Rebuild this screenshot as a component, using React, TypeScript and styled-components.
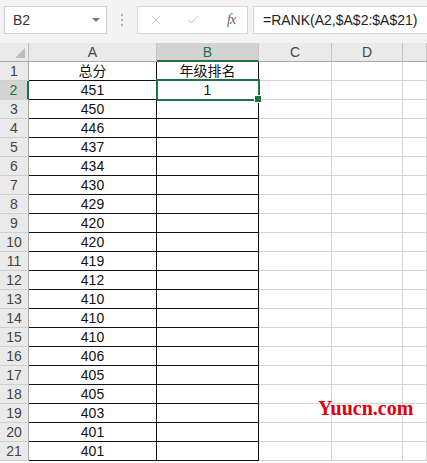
import React from 'react';
import styled, { createGlobalStyle, css } from 'styled-components';
import { X, Check } from 'lucide-react';

const GlobalStyle = createGlobalStyle`
  html, body {
    margin: 0;
    padding: 0;
    background: #ffffff;
    overflow: hidden;
  }
  * { box-sizing: border-box; }
`;

const GREEN = '#217346';
const FONT = `"Liberation Sans", "Noto Sans CJK SC", Arial, sans-serif`;

const Page = styled.div`
  position: relative;
  width: 427px;
  height: 463px;
  overflow: hidden;
  font-family: ${FONT};
`;

const Toolbar = styled.div`
  height: 43px;
  background: #f3f3f3;
  display: flex;
  align-items: flex-start;
  padding: 6px 0 0 4px;
`;

const NameBox = styled.div`
  width: 103px;
  height: 28px;
  background: #ffffff;
  border: 1px solid #d0d0d0;
  display: flex;
  align-items: center;
  justify-content: space-between;
  padding: 0 6px 0 8px;
  font-size: 14px;
  color: #333;
`;

const Caret = styled.span`
  width: 0;
  height: 0;
  border-left: 4px solid transparent;
  border-right: 4px solid transparent;
  border-top: 4px solid #7a7a7a;
`;

const Grip = styled.div`
  width: 30px;
  height: 28px;
  display: flex;
  flex-direction: column;
  align-items: center;
  justify-content: center;
  gap: 3px;
  span {
    width: 2px;
    height: 2px;
    background: #b8b8b8;
  }
`;

const FxButtons = styled.div`
  width: 111px;
  height: 28px;
  background: #ffffff;
  border: 1px solid #d6d6d6;
  display: flex;
  align-items: center;
  padding: 0 0 0 11px;
  gap: 23px;
  color: #b5b5b5;
`;

const FxLabel = styled.span`
  font-family: "Liberation Serif", serif;
  font-style: italic;
  font-size: 14px;
  color: #666;
  letter-spacing: -1px;
  margin-left: 4px;
`;

const FormulaInput = styled.div`
  flex: 1;
  margin-left: 5px;
  height: 28px;
  background: #ffffff;
  border: 1px solid #d6d6d6;
  border-right: none;
  display: flex;
  align-items: center;
  padding-left: 9px;
  font-size: 14px;
  color: #222;
  white-space: nowrap;
`;

const Sheet = styled.div`
  display: grid;
  grid-template-columns: 29px 128px 102px 73px 71px 1fr;
  grid-auto-rows: 19px;
  font-size: 14px;
`;

const Corner = styled.div`
  position: relative;
  background: #eaeaea;
  border-right: 1px solid #bdbdbd;
  border-bottom: 1px solid #a8a8a8;
  &::after {
    content: '';
    position: absolute;
    right: 3px;
    bottom: 3px;
    width: 0;
    height: 0;
    border-left: 10px solid transparent;
    border-bottom: 10px solid #bcbcbc;
  }
`;

const ColHeader = styled.div<{ $selected?: boolean }>`
  background: ${p => (p.$selected ? '#d3d3d3' : '#eaeaea')};
  border-right: 1px solid #c4c4c4;
  border-bottom: ${p => (p.$selected ? `2px solid ${GREEN}` : '1px solid #a8a8a8')};
  color: ${p => (p.$selected ? GREEN : '#444')};
  display: flex;
  align-items: center;
  justify-content: center;
  line-height: 1;
`;

const RowHeader = styled.div<{ $selected?: boolean }>`
  background: ${p => (p.$selected ? '#d3d3d3' : '#eaeaea')};
  border-right: ${p => (p.$selected ? `2px solid ${GREEN}` : '1px solid #a8a8a8')};
  border-bottom: 1px solid #cfcfcf;
  color: ${p => (p.$selected ? GREEN : '#444')};
  display: flex;
  align-items: center;
  justify-content: center;
  line-height: 1;
`;

const Cell = styled.div<{ $bordered?: boolean; $active?: boolean }>`
  position: relative;
  border-right: 1px solid ${p => (p.$bordered ? '#111' : '#d4d4d4')};
  border-bottom: 1px solid ${p => (p.$bordered ? '#111' : '#d4d4d4')};
  display: flex;
  align-items: center;
  justify-content: center;
  color: #111;
  line-height: 1;
  ${p =>
    p.$active &&
    css`
      &::after {
        content: '';
        position: absolute;
        left: -1px;
        top: -2px;
        right: -2px;
        bottom: -2px;
        border: 2px solid ${GREEN};
      }
      &::before {
        content: '';
        position: absolute;
        right: -4px;
        bottom: -4px;
        width: 6px;
        height: 6px;
        background: ${GREEN};
        border: 1px solid #ffffff;
        z-index: 2;
      }
    `}
`;

const Watermark = styled.div`
  position: absolute;
  left: 318px;
  top: 397px;
  font-family: "Liberation Serif", serif;
  font-weight: bold;
  font-size: 20px;
  color: #e0000f;
`;

const scores = [451, 450, 446, 437, 434, 430, 429, 420, 420, 419, 412, 410, 410, 410, 406, 405, 405, 403, 401, 401];

export default function App() {
  const rows: { a: string; b: string }[] = [
    { a: '总分', b: '年级排名' },
    ...scores.map((s, i) => ({ a: String(s), b: i === 0 ? '1' : '' })),
  ];

  return (
    <Page>
      <GlobalStyle />
      <Toolbar>
        <NameBox>
          B2
          <Caret />
        </NameBox>
        <Grip>
          <span />
          <span />
          <span />
        </Grip>
        <FxButtons>
          <X size={14} strokeWidth={1.5} />
          <Check size={14} strokeWidth={1.5} />
          <FxLabel>fx</FxLabel>
        </FxButtons>
        <FormulaInput>=RANK(A2,$A$2:$A$21)</FormulaInput>
      </Toolbar>
      <Sheet>
        <Corner />
        <ColHeader>A</ColHeader>
        <ColHeader $selected>B</ColHeader>
        <ColHeader>C</ColHeader>
        <ColHeader>D</ColHeader>
        <ColHeader />
        {rows.map((r, i) => (
          <React.Fragment key={i}>
            <RowHeader $selected={i === 1}>{i + 1}</RowHeader>
            <Cell $bordered>{r.a}</Cell>
            <Cell $bordered $active={i === 1}>{r.b}</Cell>
            <Cell />
            <Cell />
            <Cell />
          </React.Fragment>
        ))}
      </Sheet>
      <Watermark>Yuucn.com</Watermark>
    </Page>
  );
}
